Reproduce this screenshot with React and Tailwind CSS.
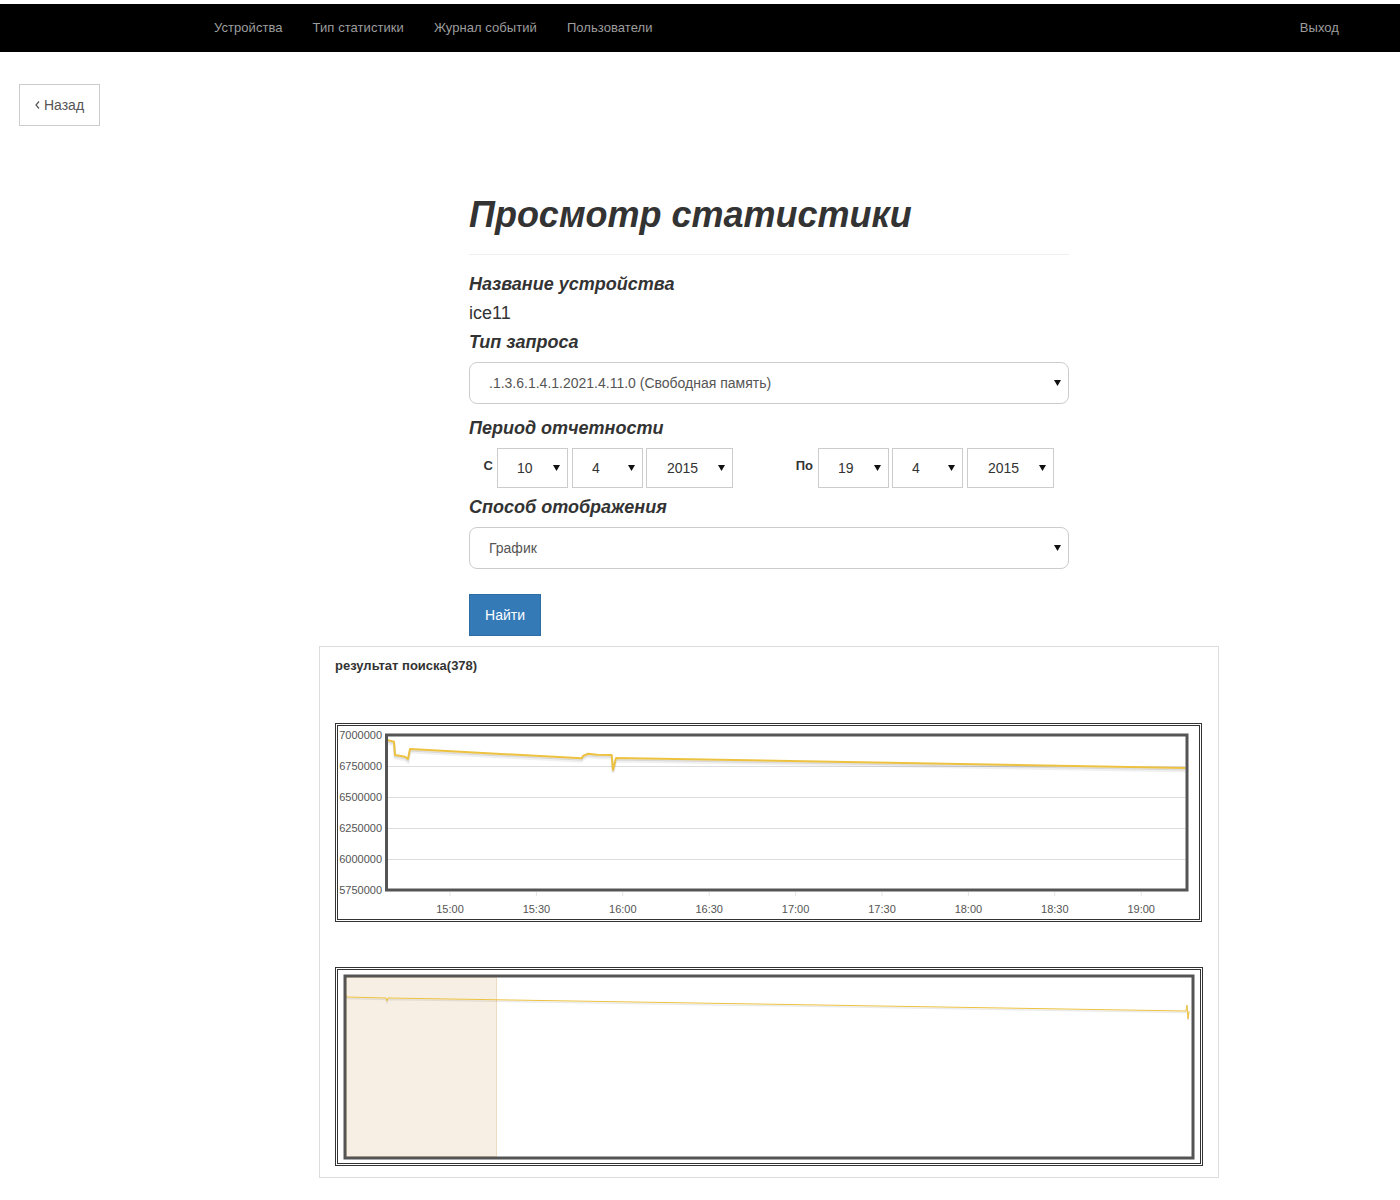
import React from "react";

const navLinks = ["Устройства", "Тип статистики", "Журнал событий", "Пользователи"];

const yTicks = [
  { label: "7000000", y: 9 },
  { label: "6750000", y: 40 },
  { label: "6500000", y: 71 },
  { label: "6250000", y: 102 },
  { label: "6000000", y: 133 },
  { label: "5750000", y: 164 },
];

const xTicks = ["15:00", "15:30", "16:00", "16:30", "17:00", "17:30", "18:00", "18:30", "19:00"];

// main series, in plot pixels
const series = [
  [48.7, 14], [56, 15.7], [57, 29], [67, 30.7], [70, 33], [72, 23],
  [243.7, 32.3], [245, 30], [250, 27.7], [259, 28.7], [273.7, 29],
  [275, 44], [278, 32], [849, 42],
];

const overview = [
  [8, 25], [9, 27], [48, 28], [49, 31], [50, 28], [848, 41], [849, 35], [850, 49], [851, 41],
];

function pts(list) {
  return list.map(([x, y]) => `${x},${y}`).join(" ");
}

function Arrow() {
  return (
    <svg width="7" height="6" viewBox="0 0 7 6" className="shrink-0">
      <polygon points="0,0 7,0 3.5,6" fill="#111" />
    </svg>
  );
}

function FakeSelect({ value, className }) {
  return (
    <div className={"flex items-center justify-between border border-[#ccc] bg-white text-[14px] " + className}>
      <span>{value}</span>
      <Arrow />
    </div>
  );
}

function MainChart() {
  return (
    <div className="w-[867px] h-[199px] border-[3px] border-double border-[#333]">
      <svg width="861" height="193" viewBox="0 0 861 193">
        <defs>
          <clipPath id="plotclip">
            <rect x="50" y="10.5" width="797.5" height="152" />
          </clipPath>
        </defs>
        {yTicks.slice(1, 5).map((t) => (
          <line key={t.label} x1="50" x2="847.5" y1={t.y + 0.5} y2={t.y + 0.5} stroke="#dcdcdc" strokeWidth="1" />
        ))}
        {xTicks.map((t, i) => {
          const x = 112 + i * 86.4;
          return (
            <g key={t}>
              <line x1={x} x2={x} y1="166" y2="170" stroke="#e4e4e4" />
              <text x={x} y="187" fontSize="11" textAnchor="middle" fill="#545454">{t}</text>
            </g>
          );
        })}
        {yTicks.map((t) => (
          <text key={t.label} x="44" y={t.y + 4} fontSize="11" textAnchor="end" fill="#545454">{t.label}</text>
        ))}
        <g clipPath="url(#plotclip)">
          <polyline points={pts(series)} transform="translate(0,3)" fill="none" stroke="rgba(0,0,0,0.06)" strokeWidth="3" />
          <polyline points={pts(series)} transform="translate(0,1.5)" fill="none" stroke="rgba(0,0,0,0.1)" strokeWidth="2" />
          <polyline points={pts(series)} fill="none" stroke="#edc240" strokeWidth="2" strokeLinejoin="round" />
        </g>
        <rect x="48.5" y="9" width="800.5" height="155" fill="none" stroke="#545454" strokeWidth="3" />
      </svg>
    </div>
  );
}

function OverviewChart() {
  return (
    <div className="w-[868px] h-[199px] border-[3px] border-double border-[#333]">
      <svg width="862" height="193" viewBox="0 0 862 193">
        <rect x="8.5" y="7.5" width="150" height="179" fill="#e8cfac" fillOpacity="0.33" stroke="#e8cfac" strokeOpacity="0.7" />
        <polyline points={pts(overview)} transform="translate(0,1.5)" fill="none" stroke="rgba(0,0,0,0.08)" strokeWidth="1.5" />
        <polyline points={pts(overview)} fill="none" stroke="#edc240" strokeWidth="1" />
        <rect x="7" y="6" width="848" height="182" fill="none" stroke="#545454" strokeWidth="3" />
      </svg>
    </div>
  );
}

export default function App() {
  return (
    <div className="min-h-[1200px] bg-white pt-1 font-['Liberation_Sans',Arial,sans-serif] text-[#333]">
      {/* navbar */}
      <nav className="flex h-12 items-center bg-black pl-[199px] pr-[46px] text-[13px] tracking-[0.06px] text-[#9d9d9d]">
        {navLinks.map((l) => (
          <a key={l} className="px-[15px]">{l}</a>
        ))}
        <a className="ml-auto px-[15px]">Выход</a>
      </nav>

      {/* back */}
      <div className="ml-[19px] mt-8 flex h-[42px] w-[81px] items-center justify-center gap-[4px] border border-[#ccc] text-[14px] text-[#555]">
        <svg width="5" height="8" viewBox="0 0 5 8">
          <polyline points="4,0.5 1,4 4,7.5" fill="none" stroke="#555" strokeWidth="1.2" />
        </svg>
        <span>Назад</span>
      </div>

      {/* form */}
      <div className="ml-[469px] mt-[69px] w-[600px]">
        <h1 className="text-[36px] font-bold italic leading-[40px] text-[#333]">Просмотр статистики</h1>
        <div className="mt-[19px] border-t border-[#eee]" />

        <h4 className="mt-[16px] text-[18px] font-bold italic leading-[26px]">Название устройства</h4>
        <div className="mt-[3px] text-[18px] leading-[26px]">ice11</div>
        <h4 className="mt-[3px] text-[18px] font-bold italic leading-[26px]">Тип запроса</h4>
        <FakeSelect
          value=".1.3.6.1.4.1.2021.4.11.0 (Свободная память)"
          className="mt-[7px] h-[42px] rounded-lg pl-[19px] pr-[7px] text-[#555]"
        />

        <h4 className="mt-[11px] text-[18px] font-bold italic leading-[26px]">Период отчетности</h4>
        <div className="mt-[7px] flex items-start">
          <div className="w-[28px] pr-[4px] pt-[10px] text-right text-[13px] font-bold leading-[16px]">С</div>
          <FakeSelect value="10" className="h-[40px] w-[71px] pl-[19px] pr-[7px]" />
          <FakeSelect value="4" className="ml-[4px] h-[40px] w-[71px] pl-[19px] pr-[7px]" />
          <FakeSelect value="2015" className="ml-[3px] h-[40px] w-[87px] pl-[20px] pr-[7px]" />
          <div className="w-[85px] pr-[5px] pt-[10px] text-right text-[13px] font-bold leading-[16px]">По</div>
          <FakeSelect value="19" className="h-[40px] w-[71px] pl-[19px] pr-[7px]" />
          <FakeSelect value="4" className="ml-[3px] h-[40px] w-[71px] pl-[19px] pr-[7px]" />
          <FakeSelect value="2015" className="ml-[4px] h-[40px] w-[87px] pl-[20px] pr-[7px]" />
        </div>

        <h4 className="mt-[6px] text-[18px] font-bold italic leading-[26px]">Способ отображения</h4>
        <FakeSelect value="График" className="mt-[7px] h-[42px] rounded-lg pl-[19px] pr-[7px] text-[#555]" />

        <button className="mt-[25px] h-[42px] w-[72px] border border-[#2e6da4] bg-[#337ab7] text-[14px] text-white">
          Найти
        </button>
      </div>

      {/* results */}
      <div className="ml-[319px] mt-[10px] h-[532px] w-[900px] border border-[#ddd] px-[15px] pt-[10px]">
        <div className="text-[13px] font-bold leading-[18px]">результат поиска(378)</div>
        <div className="mt-[48px]">
          <MainChart />
        </div>
        <div className="mt-[45px]">
          <OverviewChart />
        </div>
      </div>
    </div>
  );
}
